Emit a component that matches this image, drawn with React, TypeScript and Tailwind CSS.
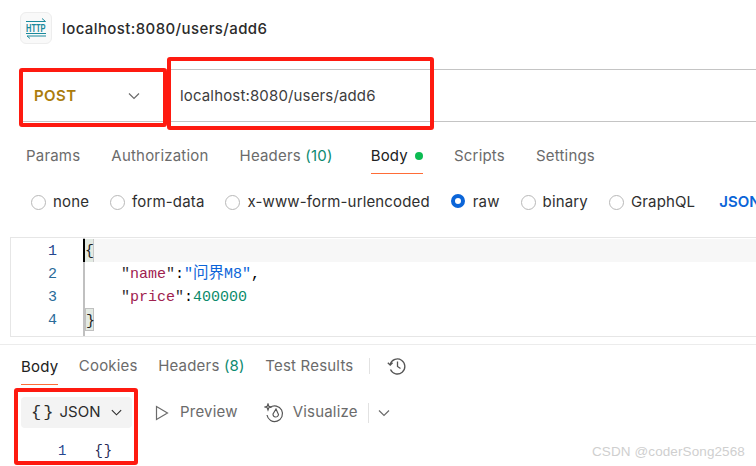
import React from "react";

const sans = "font-['Inter','Noto_Sans_CJK_SC',sans-serif]";

function HttpIcon() {
  return (
    <svg width="22" height="22" viewBox="0 0 22 22" fill="none" stroke="#1a8a9c">
      <path d="M1 4.500H20.500M17 1.500l3.500 3" strokeWidth="1" />
      <text x="1" y="15" fontSize="10.500" fontWeight="700" fill="#1a8a9c" stroke="none" fontFamily="'Liberation Sans',sans-serif" textLength="19.500" lengthAdjust="spacingAndGlyphs">HTTP</text>
      <path d="M1 16.500H21" strokeWidth="1" />
      <path d="M2 19H21M2 19l3 2.500" strokeWidth="1" />
    </svg>
  );
}

function Chevron({ color = "#6b6b6b", size = 14 }: { color?: string; size?: number }) {
  return (
    <svg width={size} height={size} viewBox="0 0 14 14" fill="none" stroke={color} strokeWidth="1.2">
      <path d="M2 4.500l5 5 5-5" />
    </svg>
  );
}

function Radio({ label, on }: { label: string; on?: boolean }) {
  return (
    <div className="flex items-center gap-[7px]">
      {on ? (
        <span className="w-[14px] h-[14px] -mt-[2px] mr-[1px] rounded-full border-[4px] border-[#0b65d8] bg-white" />
      ) : (
        <span className="w-[15px] h-[15px] rounded-full border border-[#b8b8b8] bg-white" />
      )}
      <span className="text-[#2f2f2f] text-[15px] tracking-[0.15px]">{label}</span>
    </div>
  );
}

function Tab({ children, active }: { children: React.ReactNode; active?: boolean }) {
  return <span className={`text-[15px] tracking-[0.2px] ${active ? "text-[#212121]" : "text-[#6b6b6b]"}`}>{children}</span>;
}

export default function App() {
  return (
    <div className={`relative w-[756px] h-[466px] overflow-hidden bg-white ${sans}`}>
      {/* title */}
      <div className="flex items-center gap-[10px] pl-[20px] pt-[12px] h-[44px]">
        <div className="w-[32px] h-[32px] rounded-[6px] bg-[#f9f9f9] border border-[#ededed] flex items-center justify-center">
          <HttpIcon />
        </div>
        <span className="pt-[2px] text-[15px] font-medium text-[#2b2b2b] tracking-[0.4px]">localhost:8080/users/add6</span>
      </div>

      {/* url bar */}
      <div className="ml-[23px] mt-[25px] h-[53px] flex border-y border-[#c4c4c4]">
        <div className="w-[140px] flex items-center justify-between pl-[11px] pr-[22px]">
          <span className="pt-[2px] text-[15px] font-semibold text-[#ab7c0c] tracking-[0.4px]">POST</span>
          <Chevron />
        </div>
        <div className="w-px my-[10px] bg-[#dedede]" />
        <div className="flex items-center pl-[16px] pt-[2px] text-[15px] text-[#3d3d3d] tracking-[0.15px]">localhost:8080/users/add6</div>
      </div>

      {/* request tabs */}
      <div className="relative ml-[26px] mt-[24px] h-[20px] flex items-center gap-[31px]">
        <Tab>Params</Tab>
        <Tab>Authorization</Tab>
        <Tab>
          Headers <span className="text-[#0d8a6f]">(10)</span>
        </Tab>
        <div className="relative ml-[7px] flex items-center gap-[7px]">
          <Tab active>Body</Tab>
          <span className="w-[8px] h-[8px] rounded-full bg-[#0cbb52]" />
          <span className="absolute left-0 right-0 top-[28px] h-px bg-[#ff6c37]" />
        </div>
        <Tab>Scripts</Tab>
        <Tab>Settings</Tab>
      </div>

      {/* body types */}
      <div className="ml-[31px] mt-[24px] h-[24px] flex items-center gap-[21px] whitespace-nowrap">
        <Radio label="none" />
        <Radio label="form-data" />
        <Radio label="x-www-form-urlencoded" />
        <Radio label="raw" on />
        <Radio label="binary" />
        <Radio label="GraphQL" />
        <span className="ml-[3px] text-[15px] font-semibold text-[#0b65d8]">JSON</span>
      </div>

      {/* editor */}
      <div className="ml-[10px] mt-[23px] h-[100px] border-y border-l border-[#e6e6e6] flex font-['Liberation_Mono','Noto_Sans_CJK_SC',monospace] text-[15px] leading-[25px]">
        <div className="w-[73px] pt-[1px] pr-[27px] text-right text-[#2a6b99]">
          <div className="h-[23px] text-[#26468f]">1</div>
          <div className="h-[23px]">2</div>
          <div className="h-[23px]">3</div>
          <div className="h-[23px]">4</div>
        </div>
        <div className="flex-1 pt-[1px] border-l-2 border-[#c0c0c0] -ml-px">
          <div className="relative bg-[#f7f7f7] h-[23px]">
            <span className="inline-block w-[9px] h-[23px] bg-[#e3eae3] border-r border-[#c8c8c8] text-[#222]">{"{"}</span>
            <span className="absolute left-[-2px] top-0 w-[2px] h-[23px] bg-black" />
          </div>
          <div className="h-[23px] pl-[36px]">
            <span className="text-[#2f2f2f]">"</span><span className="text-[#a0224f]">name</span><span className="text-[#2f2f2f]">"</span>:<span className="text-[#0b65d8]">"<span className="text-[15.5px]">问界</span>M8"</span>,
          </div>
          <div className="h-[23px] pl-[36px]">
            <span className="text-[#2f2f2f]">"</span><span className="text-[#a0224f]">price</span><span className="text-[#2f2f2f]">"</span>:<span className="text-[#0c8a6b]">400000</span>
          </div>
          <div className="h-[23px]">
            <span className="inline-block w-[9px] h-[23px] bg-[#e3eae3] border border-[#c0c0c0] text-[#222]">{"}"}</span>
          </div>
        </div>
      </div>

      {/* divider */}
      <div className="mt-[7px] h-px bg-[#ececec]" />

      {/* response tabs */}
      <div className="ml-[21px] mt-[11px] h-[20px] flex items-center gap-[20.5px] whitespace-nowrap">
        <div className="relative">
          <Tab active>Body</Tab>
          <span className="absolute left-0 right-0 top-[30px] h-px bg-[#ff6c37]" />
        </div>
        <Tab>Cookies</Tab>
        <Tab>
          Headers <span className="text-[#0d8a6f]">(8)</span>
        </Tab>
        <Tab>Test Results</Tab>
        <div className="w-px h-[16px] bg-[#e2e2e2] -ml-[5px]" />
        <svg className="-ml-[3px]" width="20" height="20" viewBox="0 0 20 20" fill="none" stroke="#555" strokeWidth="1.3">
          <path d="M3.200 8.200A7.500 7.500 0 1 1 3.500 13.500" />
          <path d="M0.800 6.800l2.400 2.200 2.400-2.200" />
          <path d="M10.500 5.500v5l3 2" />
        </svg>
      </div>

      {/* response toolbar */}
      <div className="ml-[21px] mt-[21px] h-[31px] flex items-center whitespace-nowrap">
        <div className="w-[111px] h-[31px] rounded-[4px] bg-[#f3f3f3] flex items-center pl-[10px] gap-[6px] text-[15px] text-[#2b2b2b]">
          <span className="text-[17px] tracking-[2px] font-['Liberation_Mono',monospace]">{"{}"}</span>
          <span className="tracking-[0.1px] -ml-[2px]">JSON</span>
          <span className="ml-[3px]"><Chevron color="#2b2b2b" size={13} /></span>
        </div>
        <div className="ml-[23px] flex items-center gap-[11px]">
          <svg width="14" height="16" viewBox="0 0 14 16" fill="none" stroke="#6b6b6b" strokeWidth="1.2">
            <path d="M1.500 1.500v13l11-6.500z" />
          </svg>
          <Tab>Preview</Tab>
        </div>
        <div className="ml-[26px] flex items-center gap-[9px]">
          <svg width="20" height="20" viewBox="0 0 20 20" fill="none" stroke="#555" strokeWidth="1.2">
            <path d="M6 4.500A7.800 7.800 0 1 1 3 12" />
            <path d="M9 11l3-5 2.500 5.500a2.700 2.700 0 0 1-5.500-.5z" />
            <path d="M4 1l.8 2.200L7 4l-2.200.8L4 7l-.8-2.200L1 4l2.200-.8z" />
          </svg>
          <Tab>Visualize</Tab>
        </div>
        <div className="ml-[10px] w-px h-[20px] bg-[#e2e2e2]" />
        <span className="ml-[8px]"><Chevron /></span>
      </div>

      {/* response code */}
      <div className="ml-[58px] mt-[13px] h-[20px] flex font-['Liberation_Mono',monospace] text-[14px] leading-[20px] text-[#26468f]">
        <span>1</span>
        <span className="ml-[28px] text-[#1f2a55] tracking-[1px]">{"{}"}</span>
      </div>

      {/* annotations */}
      <div className="absolute left-[19px] top-[68px] w-[148px] h-[59px] border-[4px] border-[#fe1a10] rounded-[3px]" />
      <div className="absolute left-[167px] top-[57px] w-[267px] h-[73px] border-[4px] border-[#fe1a10] rounded-[3px]" />
      <div className="absolute left-[14px] top-[388px] w-[124px] h-[77px] border-[4px] border-[#fe1a10] rounded-[3px]" />

      {/* watermark */}
      <span className="absolute left-[592px] top-[442px] text-[13.5px] text-[#cfcfcf] font-['Liberation_Sans',sans-serif] tracking-[0.1px]">CSDN @coderSong2568</span>
    </div>
  );
}
